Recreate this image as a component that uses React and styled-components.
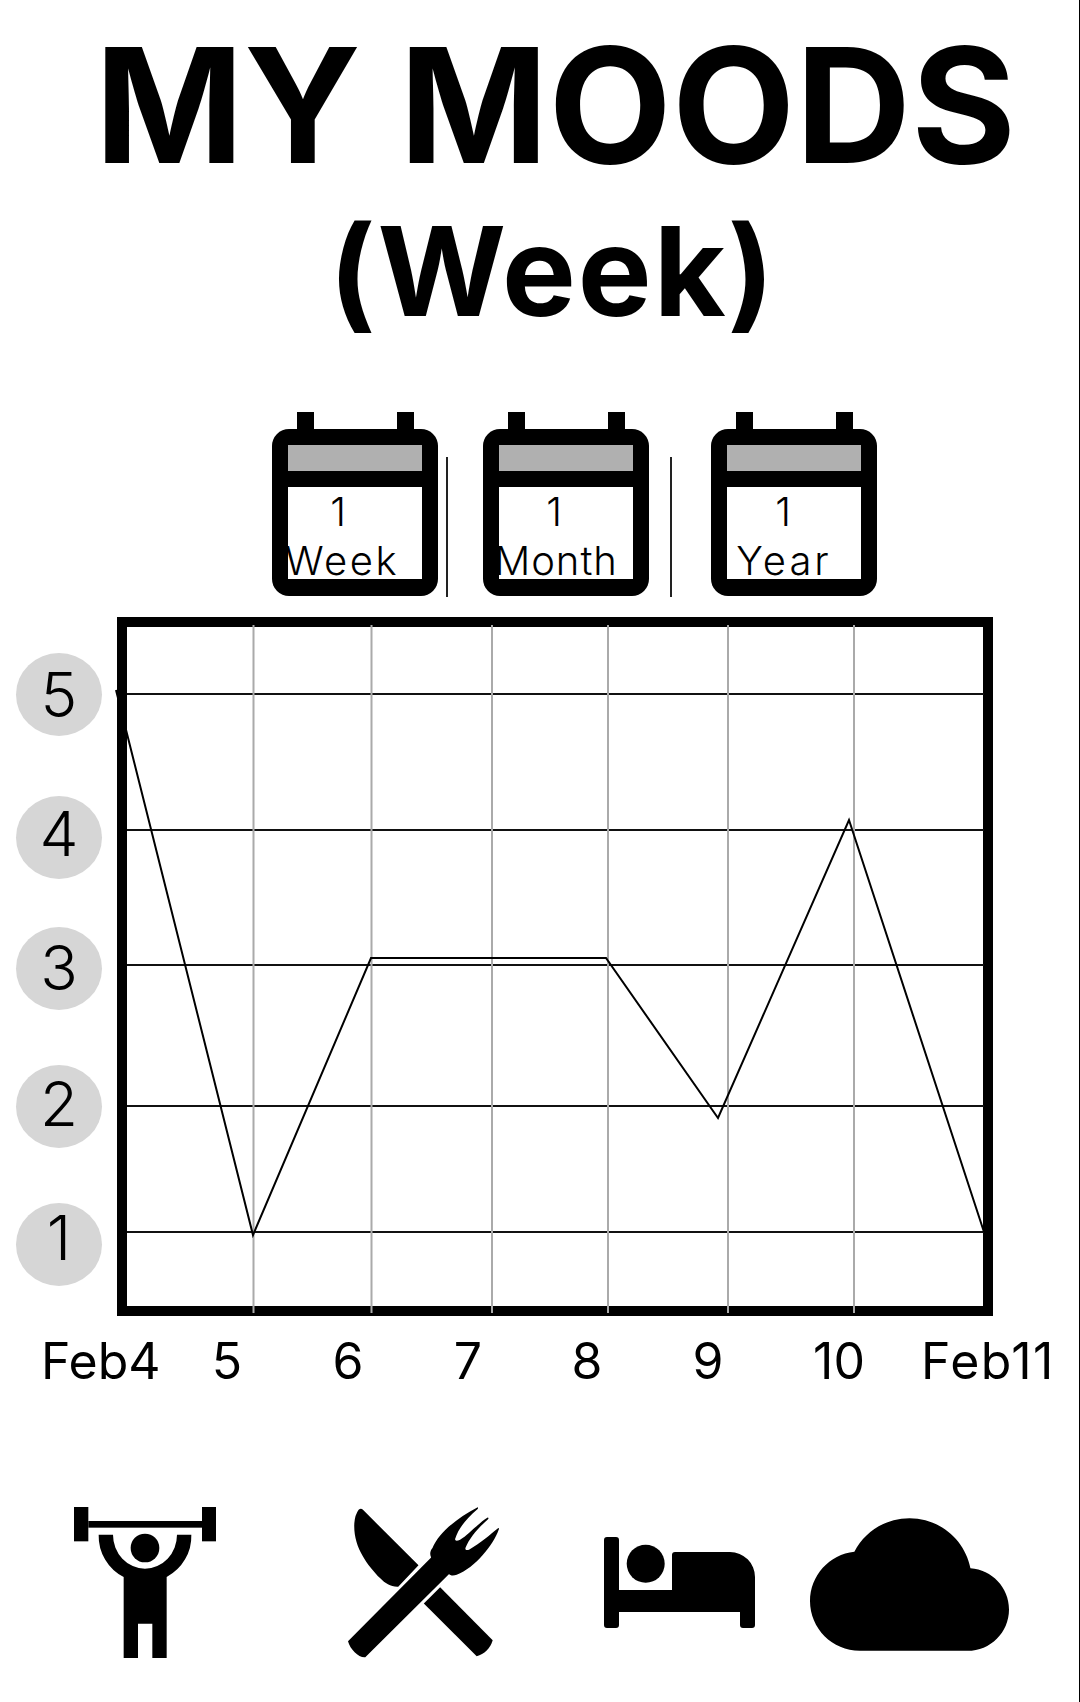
import { Fragment } from "react";
import styled, { createGlobalStyle } from "styled-components";

const GlobalStyle = createGlobalStyle`
  html, body {
    margin: 0;
    padding: 0;
    background: #fff;
  }
  body {
    font-family: Inter, "Liberation Sans", sans-serif;
    color: #000;
  }
`;

const Page = styled.div`
  box-sizing: border-box;
  width: 1080px;
  height: 1702px;
  padding-top: 25px;
  border-right: 1px solid #000;
  overflow: hidden;
`;

const Title = styled.h1`
  margin: 0;
  padding-left: 32px;
  font-size: 160px;
  line-height: 160px;
  font-weight: 700;
  letter-spacing: 0.2px;
  text-align: center;
  white-space: nowrap;
`;

const SubTitle = styled.h2`
  margin: 24px 0 0;
  padding-left: 26px;
  font-size: 124px;
  line-height: 124px;
  font-weight: 700;
  letter-spacing: 2px;
  text-align: center;
`;

const PeriodRow = styled.div`
  display: flex;
  align-items: flex-end;
  height: 185px;
  margin-top: 79px;
  padding-left: 272px;
`;

const Period = styled.div`
  position: relative;
  width: 166px;
  height: 185px;
  margin-left: ${(p) => p.$left || 0}px;
  svg {
    display: block;
  }
`;

const PeriodText = styled.div`
  position: absolute;
  left: ${(p) => p.$shift}px;
  top: 80px;
  width: 146px;
  text-align: center;
  font-weight: 300;
  white-space: nowrap;
`;

const PeriodCount = styled.div`
  padding-right: ${(p) => p.$nudge}px;
  font-size: 40px;
  line-height: 40px;
`;

const PeriodName = styled.div`
  margin-top: 10px;
  font-size: 40px;
  line-height: 38px;
  letter-spacing: ${(p) => p.$spacing}px;
`;

const Divider = styled.div`
  width: 2px;
  height: 140px;
  margin-left: ${(p) => p.$left}px;
  background: #222;
`;

const ChartRow = styled.div`
  display: flex;
  margin-top: 20px;
  padding-left: 16px;
`;

const YAxis = styled.div`
  display: flex;
  flex-direction: column;
  width: 86px;
  margin-right: 15px;
  padding-top: 36px;
`;

const MoodDot = styled.div`
  box-sizing: border-box;
  display: flex;
  align-items: center;
  justify-content: center;
  width: 86px;
  height: 83px;
  margin-top: ${(p) => p.$gap}px;
  padding-bottom: ${(p) => p.$lift}px;
  border-radius: 50%;
  background: #d6d6d6;
  font-size: 62px;
  font-weight: 350;
  line-height: 1;
`;

const ChartFrame = styled.div`
  box-sizing: border-box;
  width: 876px;
  height: 699px;
  border: 10px solid #000;
  svg {
    display: block;
    overflow: visible;
  }
`;

const XAxis = styled.div`
  display: flex;
  margin-top: 20px;
  padding-left: 41px;
`;

const XLabel = styled.div`
  width: ${(p) => p.$width}px;
  font-size: 50px;
  line-height: 50px;
  font-weight: 400;
  letter-spacing: ${(p) => p.$spacing || 0}px;
  text-align: center;
  white-space: nowrap;
`;

const ActivityRow = styled.div`
  display: flex;
  align-items: flex-start;
  margin-top: 121px;
  padding-left: 74px;
`;

const Activity = styled.div`
  margin-left: ${(p) => p.$left || 0}px;
  margin-top: ${(p) => p.$top || 0}px;
  svg {
    display: block;
  }
`;

const CalendarIcon = () => (
  <svg width="166" height="185" viewBox="0 0 166 185">
    <rect x="25" y="0" width="17" height="20" fill="#000" />
    <rect x="125" y="0" width="17" height="20" fill="#000" />
    <rect x="0" y="17" width="166" height="167" rx="17" fill="#000" />
    <rect x="16" y="33" width="134" height="26" fill="#b0b0b0" />
    <rect x="16" y="75" width="134" height="92" fill="#fff" />
  </svg>
);

const LifterIcon = () => (
  <svg width="142" height="151" viewBox="72 82 426 453">
    <rect x="72" y="82" width="43" height="103" />
    <rect x="456" y="82" width="43" height="103" />
    <rect x="115" y="124" width="341" height="20" />
    <circle cx="285" cy="205" r="43" />
    <path d="M146 165H189A96 102 0 0 0 381 165H424A139 139 0 0 1 350 292V535H307V432H264V535H221V292A139 139 0 0 1 146 165Z" />
  </svg>
);

const CutleryIcon = () => (
  <svg width="151" height="151" viewBox="893 82 454 453">
    <path d="M925 90Q932 83 938 90L1105 257L1044 321C1022 322 1005 312 990 296C950 255 908 200 912 130Q914 105 925 90Z" />
    <path d="M1170 323L1328 482C1322 505 1302 525 1280 530L1121 372Z" />
    <path d="M893 485L1143 233C1138 225 1140 212 1147 205C1165 160 1220 115 1283 82C1285 84 1285 86 1282 88C1250 115 1225 145 1215 178C1215 185 1222 183 1230 180C1255 165 1285 130 1313 113C1316 113 1316 116 1314 118C1290 140 1260 170 1246 205C1245 212 1252 212 1258 209C1290 192 1320 165 1345 145C1348 145 1347 148 1346 150C1330 195 1275 265 1220 285C1210 289 1200 288 1197 283L945 533C925 535 900 510 893 485Z" />
  </svg>
);

const BedIcon = () => (
  <svg width="151" height="91" viewBox="0 0 151 91">
    <circle cx="41.7" cy="26.7" r="19" />
    <path d="M3 0h9a3 3 0 0 1 3 3v50h53V18a3 3 0 0 1 3-3h55a25 25 0 0 1 25 25v48a3 3 0 0 1-3 3h-9a3 3 0 0 1-3-3V75H15v13a3 3 0 0 1-3 3H3a3 3 0 0 1-3-3V3a3 3 0 0 1 3-3z" />
  </svg>
);

const CloudIcon = () => (
  <svg width="199" height="199" viewBox="0 0 24 24">
    <path d="M19.35 10.04C18.67 6.59 15.64 4 12 4 9.11 4 6.6 5.64 5.35 8.04 2.34 8.36 0 10.91 0 14c0 3.31 2.69 6 6 6h13c2.76 0 5-2.24 5-5 0-2.64-2.05-4.78-4.65-4.96z" />
  </svg>
);

const MoodChart = () => {
  const rows = [67, 203, 338, 479, 605];
  const cols = [126.5, 244.5, 365, 481, 601, 727];
  const points = "-11,63 126,608 244,331 479,331 591,491 722,193 857,605";

  return (
    <svg width="856" height="679" viewBox="0 0 856 679">
      {rows.map((y) => (
        <line key={y} x1="0" x2="857" y1={y} y2={y} stroke="#111" strokeWidth="2" />
      ))}
      {cols.map((x) => (
        <line key={x} x1={x} x2={x} y1="-2" y2="686" stroke="#aaa" strokeWidth="2" />
      ))}
      <polyline points={points} fill="none" stroke="#000" strokeWidth="2" />
    </svg>
  );
};

const moods = [
  { value: 5, gap: 0, lift: 0 },
  { value: 4, gap: 60, lift: 8 },
  { value: 3, gap: 48, lift: 2 },
  { value: 2, gap: 55, lift: 6 },
  { value: 1, gap: 55, lift: 14 },
];

const days = [
  { label: "Feb4", width: 116 },
  { label: "5", width: 140 },
  { label: "6", width: 102 },
  { label: "7", width: 138 },
  { label: "8", width: 100 },
  { label: "9", width: 142 },
  { label: "10", width: 120 },
  { label: "Feb11", width: 178, spacing: 1.5 },
];

const periods = [
  { name: "Week", spacing: 2.5, shift: -3, left: 0, line: 8, nudge: 8 },
  { name: "Month", spacing: 1, shift: 0, left: 35, line: 21, nudge: 4 },
  { name: "Year", spacing: 3, shift: 0, left: 39, nudge: 2 },
];

const App = () => (
  <Page>
    <GlobalStyle />
    <Title>MY MOODS</Title>
    <SubTitle>(Week)</SubTitle>

    <PeriodRow>
      {periods.map((p) => (
        <Fragment key={p.name}>
          <Period $left={p.left}>
            <CalendarIcon />
            <PeriodText $shift={p.shift}>
              <PeriodCount $nudge={p.nudge}>1</PeriodCount>
              <PeriodName $spacing={p.spacing}>{p.name}</PeriodName>
            </PeriodText>
          </Period>
          {p.line && <Divider $left={p.line} />}
        </Fragment>
      ))}
    </PeriodRow>

    <ChartRow>
      <YAxis>
        {moods.map((m) => (
          <MoodDot key={m.value} $gap={m.gap} $lift={m.lift}>{m.value}</MoodDot>
        ))}
      </YAxis>
      <ChartFrame>
        <MoodChart />
      </ChartFrame>
    </ChartRow>

    <XAxis>
      {days.map((d) => (
        <XLabel key={d.label} $width={d.width} $spacing={d.spacing}>{d.label}</XLabel>
      ))}
    </XAxis>

    <ActivityRow>
      <Activity><LifterIcon /></Activity>
      <Activity $left={132}><CutleryIcon /></Activity>
      <Activity $left={105} $top={30}><BedIcon /></Activity>
      <Activity $left={55} $top={-22}><CloudIcon /></Activity>
    </ActivityRow>
  </Page>
);

export default App;
